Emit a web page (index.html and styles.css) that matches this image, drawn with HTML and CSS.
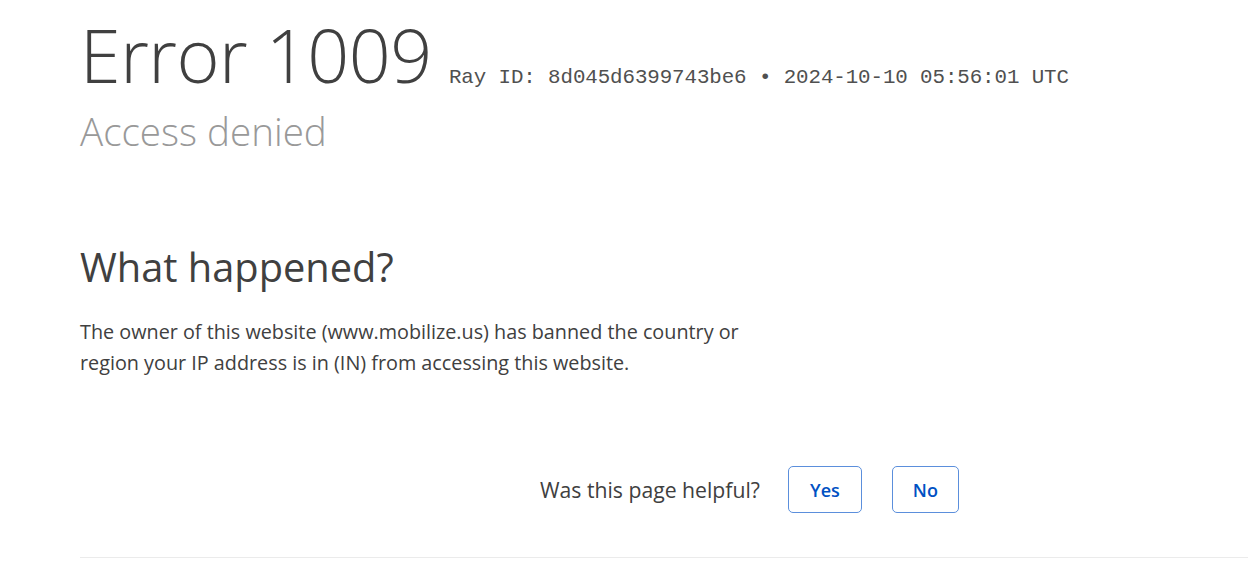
FILE: index.html
```html
<!DOCTYPE html>
<html lang="en">
<head>
<meta charset="utf-8">
<title>Access denied | www.mobilize.us used Cloudflare to restrict access</title>
<link rel="stylesheet" href="styles.css">
</head>
<body>
<div class="page">
  <header class="error-head">
    <div class="title-row">
      <h1 class="error-title">Error 1009</h1>
      <span class="ray-id">Ray ID: 8d045d6399743be6 &bull; 2024-10-10 05:56:01 UTC</span>
    </div>
    <h2 class="error-sub">Access denied</h2>
  </header>

  <section class="what">
    <h2 class="what-title">What happened?</h2>
    <p class="what-text">The owner of this website (www.mobilize.us) has banned the country or region your IP address is in (IN) from accessing this website.</p>
  </section>

  <div class="feedback">
    <span class="feedback-q">Was this page helpful?</span>
    <button class="fb-btn fb-yes" type="button">Yes</button>
    <button class="fb-btn fb-no" type="button">No</button>
  </div>

  <hr class="rule">
</div>
</body>
</html>
```

FILE: styles.css
```css
html, body {
  margin: 0;
  padding: 0;
  background: #fff;
}
body {
  font-family: "Open Sans", "Noto Sans", sans-serif;
  color: #404040;
  overflow: hidden;
}
.page {
  padding-left: 80px;
}
.error-head {
  padding-top: 13px;
}
.title-row {
  display: flex;
  align-items: baseline;
  gap: 17px;
}
.error-title {
  margin: 0;
  font-weight: 300;
  font-size: 73.6px;
  line-height: 84px;
  color: #404040;
  letter-spacing: -0.5px;
}
.ray-id {
  font-family: "Liberation Mono", "Courier New", monospace;
  font-size: 20.8px;
  letter-spacing: -0.08px;
  color: #505050;
  white-space: nowrap;
}
.error-sub {
  margin: 0;
  font-weight: 300;
  font-size: 38.6px;
  line-height: 68px;
  color: #999;
}
.what {
  padding-top: 78px;
}
.what-title {
  margin: 0;
  font-weight: 400;
  font-size: 39.8px;
  line-height: 48px;
  color: #404040;
}
.what-text {
  margin: 25px 0 0;
  width: 690px;
  font-size: 19.8px;
  line-height: 31px;
  color: #404040;
}
.feedback {
  display: flex;
  align-items: center;
  margin-top: 88px;
  padding-left: 460px;
}
.feedback-q {
  font-size: 21.2px;
  color: #404040;
  margin-right: 28px;
}
.fb-btn {
  font-family: inherit;
  font-size: 18px;
  font-weight: 600;
  color: #0051c3;
  background: #fff;
  border: 1px solid #5b8fdc;
  border-radius: 5px;
  height: 47px;
  padding: 0;
  text-align: center;
}
.fb-yes {
  width: 74px;
  margin-right: 30px;
}
.fb-no {
  width: 67px;
}
.rule {
  margin: 44px 0 0;
  border: 0;
  border-top: 1px solid #ebebeb;
}
```
